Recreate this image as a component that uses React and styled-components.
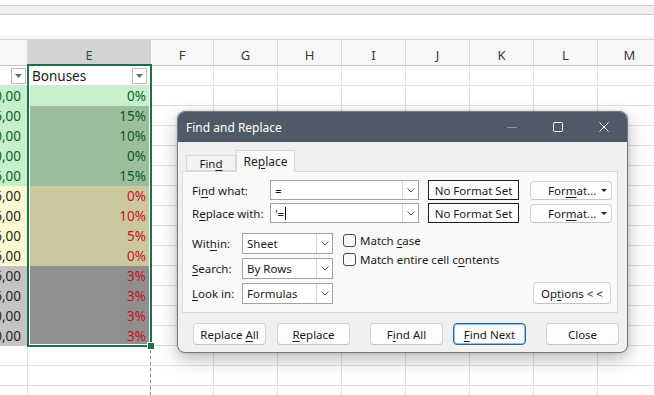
import React from 'react';
import styled, { createGlobalStyle, css } from 'styled-components';

const GlobalStyle = createGlobalStyle`
  html, body { margin: 0; padding: 0; background: #fff; }
  body { width: 654px; height: 395px; overflow: hidden; font-family: "Noto Sans", sans-serif; }
  * { box-sizing: border-box; }
`;

const Page = styled.div`
  position: relative;
  width: 654px;
  height: 395px;
  overflow: hidden;
  background: #fff;
  display: flex;
  flex-direction: column;
`;

const RibbonEdge = styled.div`
  height: 5px;
  flex: none;
  background: #fff;
`;

const RibbonBand = styled.div`
  height: 10px;
  flex: none;
  background: #f0f0f0;
  border-top: 1px solid #d2d2d2;
  border-bottom: 1px solid #c8c8c8;
`;

const FormulaBar = styled.div`
  height: 25px;
  flex: none;
  background: linear-gradient(#fff 0, #fff 21px, #f5f5f5 21px, #f5f5f5 24px);
  border-bottom: 1px solid #d6d6d6;
`;

const Sheet = styled.div`
  position: relative;
  flex: 1;
  display: grid;
  grid-template-columns: 28px 123px 63px repeat(7, 64px);
  grid-template-rows: 26px repeat(17, 20px);
  font-family: "Noto Sans", sans-serif;
`;

const ColHead = styled.div`
  display: flex;
  align-items: center;
  justify-content: center;
  padding-top: 5px;
  font-size: 13px;
  color: #3a3a3a;
  background: ${p => (p.$selected ? '#d3d3d3' : '#f7f7f7')};
  border-right: 1px solid ${p => (p.$selected ? '#d3d3d3' : '#dadada')};
  border-bottom: 1px solid #c6c6c6;
  ${p => p.$selected && css`color: #1c5c36;`}
`;

const FILLS = {
  none: { bg: '#fff', fg: '#1a1a1a' },
  g: { bg: '#c6efce', fg: '#0b6418' },
  g2: { bg: '#9dbd9f', fg: '#0b5a16' },
  y: { bg: '#fefbd3', fg: '#262626' },
  y2: { bg: '#cbc79f', fg: '#c8141e' },
  s: { bg: '#c4c4c4', fg: '#262626' },
  s2: { bg: '#8f8f8f', fg: '#c8141e' },
};

const Cell = styled.div`
  display: flex;
  align-items: center;
  justify-content: ${p => (p.$between ? 'space-between' : 'flex-end')};
  padding: 0 ${p => p.$pr ?? 4}px 0 ${p => p.$pl ?? 0}px;
  overflow: hidden;
  white-space: nowrap;
  font-size: 13.5px;
  background: ${p => FILLS[p.$fill || 'none'].bg};
  color: ${p => FILLS[p.$fill || 'none'].fg};
  border-right: 1px solid ${p => (p.$fill && p.$fill !== 'none' ? 'transparent' : '#e1e1e1')};
  border-bottom: 1px solid ${p => (p.$fill && p.$fill !== 'none' ? 'transparent' : '#e1e1e1')};
`;

const FilterButton = styled.div`
  width: 15px;
  height: 16px;
  flex: none;
  border: 1px solid #bdbdbd;
  background: #fff;
  display: flex;
  align-items: center;
  justify-content: center;
`;

const Selection = styled.div`
  position: absolute;
  left: 27px;
  top: 24px;
  width: 125px;
  height: 283px;
  border: 2px solid #1e7145;
  box-shadow: inset 0 0 0 1px #fff;
  pointer-events: none;
`;

const FillHandle = styled.div`
  position: absolute;
  left: 148px;
  top: 303px;
  width: 6px;
  height: 6px;
  background: #1e7145;
  box-shadow: 0 0 0 1px #fff;
`;

const PageBreak = styled.div`
  position: absolute;
  left: 150px;
  top: 310px;
  width: 1px;
  height: 60px;
  background: repeating-linear-gradient(#8a8a8a 0 3px, transparent 3px 6px);
`;

/* ---------- dialog ---------- */

const Dialog = styled.div`
  position: absolute;
  left: 177px;
  top: 111px;
  width: 451px;
  height: 242px;
  border-radius: 8px;
  background: #f0f0f0;
  border: 1px solid #737b86;
  box-shadow: 0 6px 18px rgba(0, 0, 0, 0.28), 0 0 3px rgba(0, 0, 0, 0.18);
  display: flex;
  flex-direction: column;
  overflow: hidden;
  font-family: "Noto Sans", sans-serif;
  font-size: 11.5px;
  color: #1a1a1a;
`;

const TitleBar = styled.div`
  height: 30px;
  flex: none;
  background: #505a67;
  display: flex;
  align-items: center;
  padding-left: 8px;
  color: #fff;
  font-size: 12px;
`;

const TitleText = styled.div`
  flex: 1;
`;

const WinButton = styled.div`
  width: 46px;
  height: 30px;
  display: flex;
  align-items: center;
  justify-content: center;
`;

const Body = styled.div`
  flex: 1;
  display: flex;
  flex-direction: column;
  padding: 8px 9px 0 4px;
`;

const TabRow = styled.div`
  height: 21px;
  display: flex;
  align-items: flex-end;
  padding-left: 4px;
`;

const Tab = styled.div`
  position: relative;
  width: ${p => p.$w}px;
  height: ${p => (p.$active ? 22 : 16)}px;
  margin-bottom: ${p => (p.$active ? -1 : 0)}px;
  z-index: ${p => (p.$active ? 1 : 0)};
  display: flex;
  align-items: center;
  justify-content: center;
  background: ${p => (p.$active ? '#f9f9f9' : '#f3f3f3')};
  border: 1px solid #d9d9d9;
  border-bottom: ${p => (p.$active ? 'none' : '1px solid #d9d9d9')};
  font-size: ${p => (p.$active ? 12 : 11.5)}px;
`;

const Panel = styled.div`
  height: 142px;
  flex: none;
  background: #f9f9f9;
  border: 1px solid #d9d9d9;
  padding: 8px 6px 0 9px;
  display: flex;
  flex-direction: column;
`;

const FieldRow = styled.div`
  height: 20px;
  display: flex;
  align-items: center;
  margin-top: ${p => p.$mt || 0}px;
`;

const Label = styled.div`
  width: ${p => p.$w}px;
  flex: none;
  white-space: nowrap;
`;

const Combo = styled.div`
  width: ${p => p.$w}px;
  height: ${p => p.$h || 20}px;
  flex: none;
  display: flex;
  background: #fff;
  border: 1px solid #a3a3a3;
`;

const ComboText = styled.div`
  flex: 1;
  display: flex;
  align-items: center;
  padding-left: ${p => p.$pl ?? 4}px;
  white-space: nowrap;
`;

const Caret = styled.span`
  display: inline-block;
  width: 1px;
  height: 13px;
  background: #000;
  margin-left: 1px;
`;

const DropPart = styled.div`
  width: 16px;
  flex: none;
  border-left: 1px solid #d6d6d6;
  display: flex;
  align-items: center;
  justify-content: center;
  background: #fff;
`;

const NoFormat = styled.div`
  width: 91px;
  height: 20px;
  margin-left: 9px;
  flex: none;
  display: flex;
  align-items: center;
  justify-content: center;
  background: #fff;
  border: 1px solid #1e1e1e;
  white-space: nowrap;
`;

const Button = styled.div`
  width: ${p => p.$w || 73}px;
  height: ${p => p.$h || 22}px;
  margin-left: ${p => p.$ml || 0}px;
  flex: none;
  display: flex;
  align-items: center;
  justify-content: center;
  background: #fdfdfd;
  border: 1px solid ${p => (p.$focus ? '#1f6aa5' : '#d3d3d3')};
  border-bottom-color: ${p => (p.$focus ? '#1f6aa5' : '#c4c4c4')};
  border-radius: 4px;
  white-space: nowrap;
  ${p => p.$focus && css`box-shadow: inset 0 0 0 1px rgba(31, 106, 165, 0.45);`}
`;

const BtnLabel = styled.span`
  white-space: pre;
`;

const FormatButton = styled(Button)`
  justify-content: flex-start;
  padding: 0 4px 0 17px;
`;

const DropTri = styled.span`
  margin-left: auto;
  width: 0;
  height: 0;
  border-left: 3px solid transparent;
  border-right: 3px solid transparent;
  border-top: 3px solid #222;
`;

const Lower = styled.div`
  margin-top: 10px;
  display: flex;
  flex: 1;
  padding-bottom: 8px;
`;

const SelectCol = styled.div`
  display: flex;
  flex-direction: column;
  gap: 4px;
`;

const SelRow = styled.div`
  height: 21px;
  display: flex;
  align-items: center;
`;

const CheckCol = styled.div`
  margin-left: 10px;
  padding-top: 1px;
  display: flex;
  flex-direction: column;
  gap: 6px;
`;

const CheckRow = styled.div`
  height: 13px;
  display: flex;
  align-items: center;
  gap: 4px;
  white-space: nowrap;
`;

const CheckBox = styled.div`
  width: 13px;
  height: 13px;
  flex: none;
  border: 1px solid #4a4a4a;
  border-radius: 3px;
  background: #fbfbfb;
`;

const OptionsWrap = styled.div`
  margin-left: auto;
  align-self: flex-end;
`;

const ButtonRow = styled.div`
  margin-top: 10px;
  padding-left: 11px;
  display: flex;
`;

const Key = styled.span`
  text-decoration: underline;
  text-underline-offset: 2px;
  text-decoration-thickness: 1px;
`;

const Chevron = () => (
  <svg width="8" height="5" viewBox="0 0 8 5">
    <polyline points="0.5,0.5 4,4 7.5,0.5" fill="none" stroke="#5a5a5a" strokeWidth="1" />
  </svg>
);

const FilterTri = () => (
  <svg width="7" height="4" viewBox="0 0 7 4">
    <polygon points="0,0 7,0 3.5,4" fill="#6a6a6a" />
  </svg>
);

const ROWS = [
  { head: true },
  { d: '10,00', df: 'g', e: '0%', ef: 'g' },
  { d: '16,00', df: 'g', e: '15%', ef: 'g2' },
  { d: '10,00', df: 'g', e: '10%', ef: 'g2' },
  { d: '10,00', df: 'g', e: '0%', ef: 'g2' },
  { d: '16,00', df: 'g', e: '15%', ef: 'g2' },
  { d: '16,00', df: 'y', e: '0%', ef: 'y2' },
  { d: '16,00', df: 'y', e: '10%', ef: 'y2' },
  { d: '16,00', df: 'y', e: '5%', ef: 'y2' },
  { d: '16,00', df: 'y', e: '0%', ef: 'y2' },
  { d: '16,00', df: 's', e: '3%', ef: 's2' },
  { d: '16,00', df: 's', e: '3%', ef: 's2' },
  { d: '10,00', df: 's', e: '3%', ef: 's2' },
  { d: '10,00', df: 's', e: '3%', ef: 's2' },
  {},
  {},
  {},
];

const COLS = ['E', 'F', 'G', 'H', 'I', 'J', 'K', 'L', 'M'];

export default function App() {
  return (
    <Page>
      <GlobalStyle />
      <RibbonEdge />
      <RibbonBand />
      <FormulaBar />
      <Sheet>
        <ColHead />
        {COLS.map(c => (
          <ColHead key={c} $selected={c === 'E'}>{c}</ColHead>
        ))}
        {ROWS.map((r, i) => (
          <React.Fragment key={i}>
            {r.head ? (
              <>
                <Cell $pr={1}><FilterButton><FilterTri /></FilterButton></Cell>
                <Cell $between $pl={4} $pr={3}>
                  <span>Bonuses</span>
                  <FilterButton><FilterTri /></FilterButton>
                </Cell>
              </>
            ) : (
              <>
                <Cell $fill={r.df} $pr={6}>{r.d || ''}</Cell>
                <Cell $fill={r.ef} $pr={4}>{r.e || ''}</Cell>
              </>
            )}
            {COLS.slice(1).map(c => (
              <Cell key={c} />
            ))}
          </React.Fragment>
        ))}
        <Selection />
        <FillHandle />
        <PageBreak />
      </Sheet>

      <Dialog>
        <TitleBar>
          <TitleText>Find and Replace</TitleText>
          <WinButton>
            <svg width="10" height="1" viewBox="0 0 10 1"><rect width="10" height="1" fill="#8d96a1" /></svg>
          </WinButton>
          <WinButton>
            <svg width="10" height="10" viewBox="0 0 10 10"><rect x="0.5" y="0.5" width="9" height="9" rx="1" fill="none" stroke="#fff" strokeWidth="1" /></svg>
          </WinButton>
          <WinButton>
            <svg width="10" height="10" viewBox="0 0 10 10"><path d="M0.5 0.5 L9.5 9.5 M9.5 0.5 L0.5 9.5" stroke="#fff" strokeWidth="1" /></svg>
          </WinButton>
        </TitleBar>
        <Body>
          <TabRow>
            <Tab $w={50}><BtnLabel>Fin<Key>d</Key></BtnLabel></Tab>
            <Tab $w={59} $active><BtnLabel>Re<Key>p</Key>lace</BtnLabel></Tab>
          </TabRow>
          <Panel>
            <FieldRow>
              <Label $w={78}>Fi<Key>n</Key>d what:</Label>
              <Combo $w={149}>
                <ComboText>=</ComboText>
                <DropPart><Chevron /></DropPart>
              </Combo>
              <NoFormat>No Format Set</NoFormat>
              <FormatButton $w={82} $h={19} $ml={11}>
                <BtnLabel>For<Key>m</Key>at...</BtnLabel>
                <DropTri />
              </FormatButton>
            </FieldRow>
            <FieldRow $mt={3}>
              <Label $w={78}>R<Key>e</Key>place with:</Label>
              <Combo $w={149}>
                <ComboText>'=<Caret /></ComboText>
                <DropPart><Chevron /></DropPart>
              </Combo>
              <NoFormat>No Format Set</NoFormat>
              <FormatButton $w={82} $h={19} $ml={11}>
                <BtnLabel>For<Key>m</Key>at...</BtnLabel>
                <DropTri />
              </FormatButton>
            </FieldRow>
            <Lower>
              <SelectCol>
                <SelRow>
                  <Label $w={50}>Wit<Key>h</Key>in:</Label>
                  <Combo $w={91} $h={21}>
                    <ComboText>Sheet</ComboText>
                    <DropPart><Chevron /></DropPart>
                  </Combo>
                </SelRow>
                <SelRow>
                  <Label $w={50}><Key>S</Key>earch:</Label>
                  <Combo $w={91} $h={21}>
                    <ComboText>By Rows</ComboText>
                    <DropPart><Chevron /></DropPart>
                  </Combo>
                </SelRow>
                <SelRow>
                  <Label $w={50}><Key>L</Key>ook in:</Label>
                  <Combo $w={91} $h={21}>
                    <ComboText>Formulas</ComboText>
                    <DropPart><Chevron /></DropPart>
                  </Combo>
                </SelRow>
              </SelectCol>
              <CheckCol>
                <CheckRow>
                  <CheckBox />
                  <BtnLabel>Match <Key>c</Key>ase</BtnLabel>
                </CheckRow>
                <CheckRow>
                  <CheckBox />
                  <BtnLabel>Match entire cell c<Key>o</Key>ntents</BtnLabel>
                </CheckRow>
              </CheckCol>
              <OptionsWrap>
                <Button $w={78} $h={22}><BtnLabel>Op<Key>t</Key>ions &lt; &lt;</BtnLabel></Button>
              </OptionsWrap>
            </Lower>
          </Panel>
          <ButtonRow>
            <Button><BtnLabel>Replace <Key>A</Key>ll</BtnLabel></Button>
            <Button $ml={11}><BtnLabel><Key>R</Key>eplace</BtnLabel></Button>
            <Button $ml={20}><BtnLabel>F<Key>i</Key>nd All</BtnLabel></Button>
            <Button $ml={10} $focus><BtnLabel><Key>F</Key>ind Next</BtnLabel></Button>
            <Button $ml={20}><BtnLabel>Close</BtnLabel></Button>
          </ButtonRow>
        </Body>
      </Dialog>
    </Page>
  );
}
